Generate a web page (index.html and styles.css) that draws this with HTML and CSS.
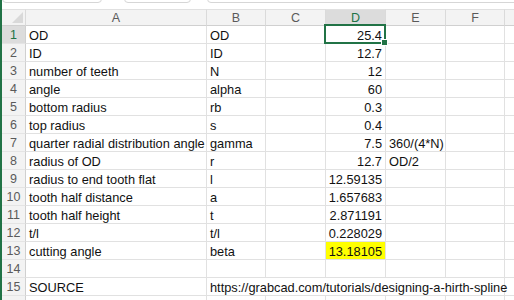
FILE: index.html
```html
<!DOCTYPE html>
<html lang="en">
<head>
<meta charset="utf-8">
<title>Hirth spline sheet</title>
<link rel="stylesheet" href="styles.css">
</head>
<body>
<div class="window">
  <div class="toolbar">
    <div class="tb-box tb-name"></div>
    <div class="tb-box tb-fx"></div>
    <div class="tb-box tb-formula"></div>
  </div>
  <div class="sheet">
    <div class="hd corner"><span class="tri"></span></div>
    <div class="hd col">A</div>
    <div class="hd col">B</div>
    <div class="hd col">C</div>
    <div class="hd col sel-col">D</div>
    <div class="hd col">E</div>
    <div class="hd col">F</div>
    <div class="hd col last"></div>

    <div class="hd row sel-row">1</div><div class="c">OD</div><div class="c">OD</div><div class="c"></div><div class="c num active">25.4</div><div class="c"></div><div class="c"></div><div class="c last"></div>
    <div class="hd row">2</div><div class="c">ID</div><div class="c">ID</div><div class="c"></div><div class="c num">12.7</div><div class="c"></div><div class="c"></div><div class="c last"></div>
    <div class="hd row">3</div><div class="c">number of teeth</div><div class="c">N</div><div class="c"></div><div class="c num">12</div><div class="c"></div><div class="c"></div><div class="c last"></div>
    <div class="hd row">4</div><div class="c">angle</div><div class="c">alpha</div><div class="c"></div><div class="c num">60</div><div class="c"></div><div class="c"></div><div class="c last"></div>
    <div class="hd row">5</div><div class="c">bottom radius</div><div class="c">rb</div><div class="c"></div><div class="c num">0.3</div><div class="c"></div><div class="c"></div><div class="c last"></div>
    <div class="hd row">6</div><div class="c">top radius</div><div class="c">s</div><div class="c"></div><div class="c num">0.4</div><div class="c"></div><div class="c"></div><div class="c last"></div>
    <div class="hd row">7</div><div class="c">quarter radial distribution angle</div><div class="c">gamma</div><div class="c"></div><div class="c num">7.5</div><div class="c">360/(4*N)</div><div class="c"></div><div class="c last"></div>
    <div class="hd row">8</div><div class="c">radius of OD</div><div class="c">r</div><div class="c"></div><div class="c num">12.7</div><div class="c">OD/2</div><div class="c"></div><div class="c last"></div>
    <div class="hd row">9</div><div class="c">radius to end tooth flat</div><div class="c">l</div><div class="c"></div><div class="c num">12.59135</div><div class="c"></div><div class="c"></div><div class="c last"></div>
    <div class="hd row">10</div><div class="c">tooth half distance</div><div class="c">a</div><div class="c"></div><div class="c num">1.657683</div><div class="c"></div><div class="c"></div><div class="c last"></div>
    <div class="hd row">11</div><div class="c">tooth half height</div><div class="c">t</div><div class="c"></div><div class="c num">2.871191</div><div class="c"></div><div class="c"></div><div class="c last"></div>
    <div class="hd row">12</div><div class="c">t/l</div><div class="c">t/l</div><div class="c"></div><div class="c num">0.228029</div><div class="c"></div><div class="c"></div><div class="c last"></div>
    <div class="hd row">13</div><div class="c">cutting angle</div><div class="c">beta</div><div class="c"></div><div class="c num hl">13.18105</div><div class="c"></div><div class="c"></div><div class="c last"></div>
    <div class="hd row">14</div><div class="c"></div><div class="c"></div><div class="c"></div><div class="c"></div><div class="c"></div><div class="c"></div><div class="c last"></div>
    <div class="hd row">15</div><div class="c">SOURCE</div><div class="c spill">https://grabcad.com/tutorials/designing-a-hirth-spline</div><div class="c nob"></div><div class="c nob"></div><div class="c nob"></div><div class="c"></div><div class="c last"></div>
    <div class="hd row"></div><div class="c"></div><div class="c"></div><div class="c"></div><div class="c"></div><div class="c"></div><div class="c"></div><div class="c last"></div>
  </div>
</div>
</body>
</html>
```

FILE: styles.css
```css
* { box-sizing: border-box; }
html, body {
  margin: 0;
  padding: 0;
  background: #ffffff;
  overflow: hidden;
}
.window {
  width: 514px;
  height: 300px;
  border-left: 2px solid #217346;
  overflow: hidden;
  background: #fff;
}
.toolbar {
  height: 9px;
  display: flex;
  overflow: hidden;
}
.tb-box {
  height: 13px;
  margin-top: -10px;
  border: 1px solid #d6d6d6;
  border-radius: 4px;
  background: #fff;
  flex: none;
}
.tb-name { width: 100px; }
.tb-fx { width: 67px; margin-left: 22px; }
.tb-formula { flex: 1; margin-left: 16px; margin-right: -10px; }

.sheet {
  display: grid;
  grid-template-columns: 24px 181px 59px 60px 60px 60px 59px 1fr;
  grid-template-rows: 17px repeat(16, 18px);
  font-family: "Liberation Sans", Arial, sans-serif;
  font-size: 12.8px;
  color: #111;
}
.hd {
  background: #f3f3f3;
  color: #5a5a5a;
  border-right: 1px solid #dadada;
  border-bottom: 1px solid #d0d0d0;
  display: flex;
  align-items: center;
  justify-content: center;
  font-family: "Liberation Sans", Arial, sans-serif;
  font-size: 12.5px;
}
.hd.col { border-top: 1px solid #e0e0e0; padding-top: 1px; }
.hd.last { border-right: none; }
.corner { position: relative; border-top: 1px solid #e0e0e0; }
.corner .tri {
  position: absolute;
  right: 2px;
  bottom: 2px;
  width: 0;
  height: 0;
  border-left: 11px solid transparent;
  border-bottom: 11px solid #d9d9d9;
}
.hd.row {
  padding-top: 1px;
  border-right: 1px solid #d0d0d0;
  border-bottom: 1px solid #e4e4e4;
}
.sel-col {
  background: #dcdcdc;
  color: #217346;
  border-bottom: 2px solid #217346;
}
.sel-row {
  background: #dcdcdc;
  color: #217346;
  border-right: 2px solid #217346;
}
.c {
  border-right: 1px solid #e1e1e1;
  border-bottom: 1px solid #e1e1e1;
  padding: 2px 3px 0 3px;
  white-space: nowrap;
  display: flex;
  align-items: center;
}
.c.last { border-right: none; }
.c.num { justify-content: flex-end; }
.c.hl { background: #ffff00; }
.c.spill { overflow: visible; border-right: none; position: relative; z-index: 1; }
.c.nob { border-right: none; }
.active { position: relative; }
.active::after {
  content: "";
  position: absolute;
  left: -2px;
  top: -2px;
  right: -1px;
  bottom: -1px;
  border: 2px solid #217346;
}
.active::before {
  content: "";
  position: absolute;
  right: -3px;
  bottom: -3px;
  width: 5px;
  height: 5px;
  background: #217346;
  border: 1px solid #fff;
  z-index: 2;
}
```
